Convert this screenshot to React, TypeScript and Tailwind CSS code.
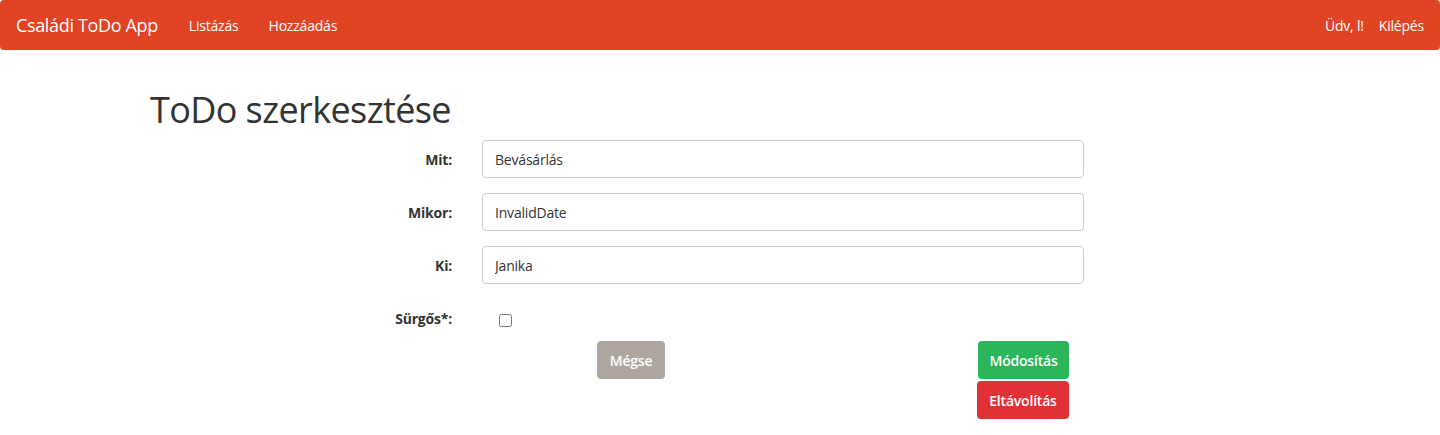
import { useState } from "react";

const font = { fontFamily: '"Open Sans", "Liberation Sans", sans-serif' };

function Field({ label, value }: { label: string; value: string }) {
	return (
		<div className="flex items-center mb-[15px]">
			<label className="w-[317px] pr-[15px] text-right text-[14px] font-bold text-[#333]">{label}</label>
			<div className="w-[632px] px-[15px]">
				<input
					defaultValue={value}
					className="w-full h-[38px] px-[12px] border border-[#ccc] rounded-[4px] text-[14px] text-[#333] outline-none"
				/>
			</div>
		</div>
	);
}

export default function App() {
	const [urgent, setUrgent] = useState(false);

	return (
		<div className="bg-white min-h-[435px] tracking-[-0.2px]" style={font}>
			<nav className="h-[50px] bg-[#e04424] rounded-[4px] flex items-center justify-between text-white">
				<div className="flex items-center">
					<span className="pl-[16px] pr-[31px] text-[18px] tracking-[-0.35px]">Családi ToDo App</span>
					<a className="text-[14px] mr-[30px]">Listázás</a>
					<a className="text-[14px]">Hozzáadás</a>
				</div>
				<div className="flex items-center text-[14px] pr-[16px] gap-[15px]">
					<span>Üdv, l!</span>
					<a>Kilépés</a>
				</div>
			</nav>

			<main className="w-[1170px] mx-auto px-[15px]">
				<h1 className="mt-[40px] mb-[10px] text-[36px] leading-[40px] tracking-[-0.6px] text-[#333]">ToDo szerkesztése</h1>

				<form>
					<Field label="Mit:" value="Bevásárlás" />
					<Field label="Mikor:" value="InvalidDate" />
					<Field label="Ki:" value="Janika" />

					<div className="flex mb-[12px]">
						<label className="w-[317px] pr-[15px] pt-[9px] text-right text-[14px] font-bold text-[#333]">Sürgős*:</label>
						<div className="px-[15px] pt-[15px]">
							<input
								type="checkbox"
								checked={urgent}
								onChange={() => setUrgent(!urgent)}
								className="ml-[17px] w-[13px] h-[13px] block"
							/>
						</div>
					</div>

					<div className="flex ml-[317px] w-[632px] px-[15px]">
						<div className="flex-1 pl-[115px]">
							<button type="button" className="h-[38px] w-[68px] rounded-[4px] bg-[#aea79f] text-white text-[14px] font-semibold">
								Mégse
							</button>
						</div>
						<div className="flex flex-col items-end gap-[2px] pr-[15px]">
							<button type="button" className="h-[38px] w-[91px] rounded-[4px] bg-[#2cb55b] text-white text-[14px] font-semibold">
								Módosítás
							</button>
							<button type="button" className="h-[38px] w-[92px] rounded-[4px] bg-[#e03236] text-white text-[14px] font-semibold">
								Eltávolítás
							</button>
						</div>
					</div>
				</form>
			</main>
		</div>
	);
}
